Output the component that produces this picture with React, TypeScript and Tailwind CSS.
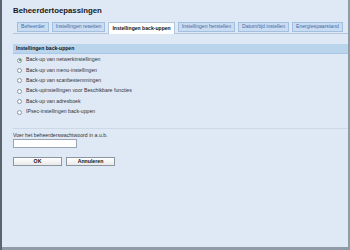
import React from "react";

const tabs = [
  "Beheerder",
  "Instellingen resetten",
  "Instellingen back-uppen",
  "Instellingen herstellen",
  "Datum/tijd instellen",
  "Energiespaarstand",
];

const options = [
  "Back-up van netwerkinstellingen",
  "Back-up van menu-instellingen",
  "Back-up van scanbestemmingen",
  "Back-upinstellingen voor Beschikbare functies",
  "Back-up van adresboek",
  "IPsec-instellingen back-uppen",
];

export default function App() {
  return (
    <div
      className="w-[350px] h-[250px] overflow-hidden flex bg-[#dfe9f5] text-[#222]"
      style={{ fontFamily: '"Liberation Sans", Arial, sans-serif' }}
    >
      <div className="w-[2px] h-full bg-[#5b6570]" />
      <div className="flex-1 flex flex-col border-r-2 border-b-[3px] border-[#8f9ba6]">
        <div className="flex-1 flex flex-col pl-[11px]">
          <div className="h-[21px] flex items-center text-[7.8px] font-bold text-[#1a1a1a]">
            Beheerdertoepassingen
          </div>
          <div className="flex items-end gap-[3px] pl-[4px] border-b border-[#b3c6db] h-[13px]">
            {tabs.map((t, i) =>
              i === 2 ? (
                <div
                  key={t}
                  className="h-[12px] px-[3px] flex items-center bg-white border border-[#b3c6db] border-b-0 text-[5.1px] font-bold text-[#111] whitespace-nowrap mb-[-1px]"
                >
                  {t}
                </div>
              ) : (
                <div
                  key={t}
                  className="h-[10px] mb-[1px] px-[3px] flex items-center bg-[#c9dcf1] border border-[#a3bfdf] text-[5.1px] text-[#3f6aa8] whitespace-nowrap"
                >
                  {t}
                </div>
              )
            )}
          </div>
          <div className="h-[10px]" />
          <div className="h-[10px] flex items-center pl-[3px] bg-[#bad4ec] border-b border-[#a9c7e6] text-[5.1px] font-bold text-[#111]">
            Instellingen back-uppen
          </div>
          <div className="flex flex-col pt-[1px]">
            {options.map((o, i) => (
              <div key={o} className="h-[10.4px] flex items-center pl-[4px] gap-[4px] text-[5.2px] text-[#333]">
                <span className="w-[5px] h-[5px] rounded-full border border-[#8a96a3] bg-white flex items-center justify-center">
                  {i === 0 && <span className="w-[2px] h-[2px] rounded-full bg-[#3a9a3a]" />}
                </span>
                {o}
              </div>
            ))}
          </div>
          <div className="mt-[11px] border-t border-[#cbd8e6]" />
          <div className="pt-[4px] text-[5.2px] text-[#333] h-[10px] flex items-center">
            Voer het beheerderswachtwoord in a.u.b.
          </div>
          <div className="w-[64px] h-[9px] bg-white border border-[#9aa5b1]" />
          <div className="flex gap-[4px] mt-[9px]">
            <button className="w-[49px] h-[9px] bg-gradient-to-b from-white to-[#e9e9e9] border border-[#8c96a0] text-[5.2px] font-bold text-[#111] flex items-center justify-center">
              OK
            </button>
            <button className="w-[49px] h-[9px] bg-gradient-to-b from-white to-[#e9e9e9] border border-[#8c96a0] text-[5.2px] font-bold text-[#111] flex items-center justify-center">
              Annuleren
            </button>
          </div>
        </div>
      </div>
    </div>
  );
}
